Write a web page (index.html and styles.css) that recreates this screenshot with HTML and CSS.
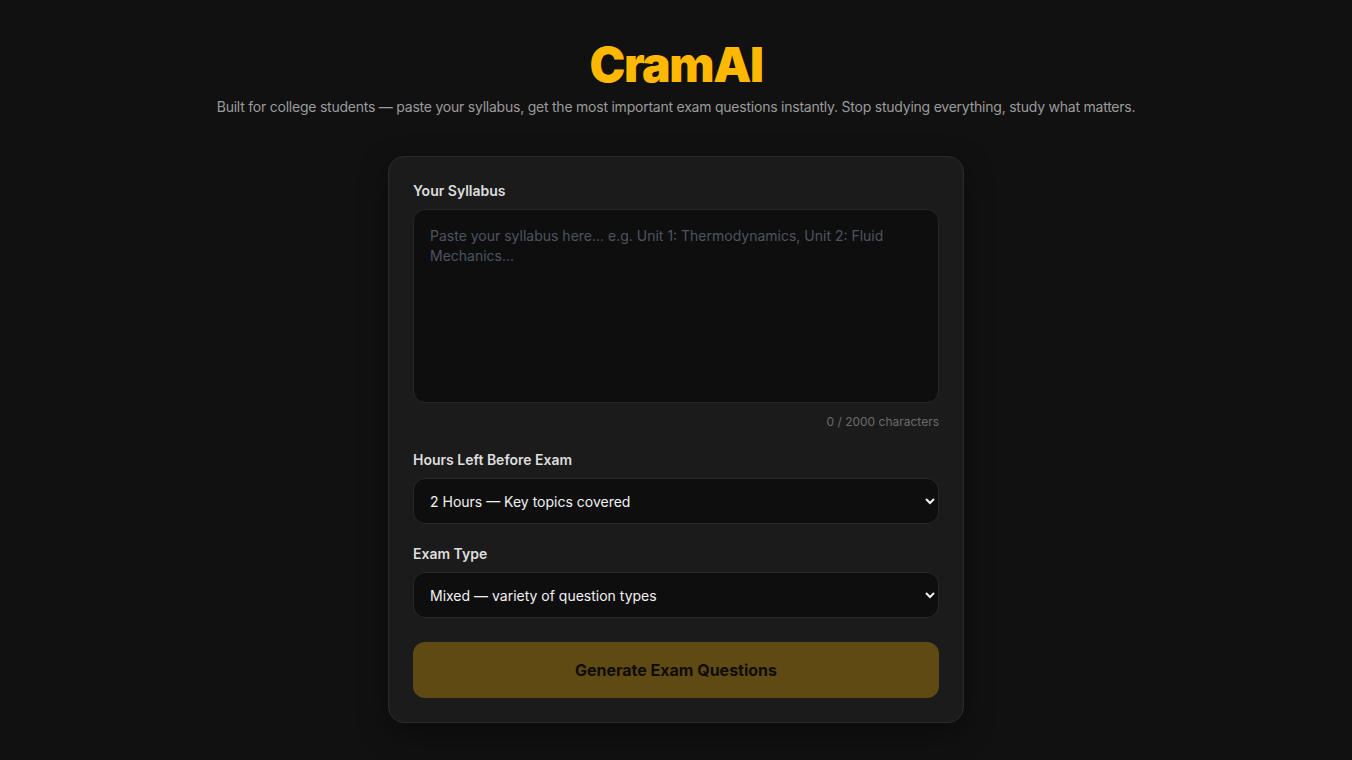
FILE: index.html
```html
<!DOCTYPE html>
<html lang="en">
<head>
    <meta charset="UTF-8">
    <meta name="viewport" content="width=device-width, initial-scale=1.0">
    <title>CramAI</title>
    <link rel="stylesheet" href="styles.css">
</head>
<body>
    <header class="hero">
        <h1 class="logo">CramAI</h1>
        <p class="tagline">Built for college students — paste your syllabus, get the most important exam questions instantly. Stop studying everything, study what matters.</p>
    </header>

    <main class="card">
        <div class="field">
            <label for="syllabus">Your Syllabus</label>
            <textarea id="syllabus" maxlength="2000" placeholder="Paste your syllabus here... e.g. Unit 1: Thermodynamics, Unit 2: Fluid Mechanics..."></textarea>
            <div class="char-count"><span id="charCount">0</span> / 2000 characters</div>
        </div>

        <div class="field">
            <label for="hours">Hours Left Before Exam</label>
            <select id="hours">
                <option>1 Hour — Only the essentials</option>
                <option selected>2 Hours — Key topics covered</option>
                <option>4 Hours — Broad coverage</option>
                <option>8+ Hours — Full review</option>
            </select>
        </div>

        <div class="field last">
            <label for="examType">Exam Type</label>
            <select id="examType">
                <option selected>Mixed — variety of question types</option>
                <option>Multiple choice</option>
                <option>Short answer</option>
                <option>Long answer / essay</option>
            </select>
        </div>

        <button type="button" class="generate" id="generateBtn" disabled>Generate Exam Questions</button>
    </main>

    <script>
        // keep the counter and button state in sync with the textarea
        var syllabus = document.getElementById("syllabus");
        syllabus.addEventListener("input", function() {
            document.getElementById("charCount").textContent = syllabus.value.length;
            document.getElementById("generateBtn").disabled = syllabus.value.trim() === "";
        });
    </script>
</body>
</html>
```

FILE: styles.css
```css
body {
    margin: 0;
    padding: 38px 20px 40px;
    background: #111111;
    color: #e5e5e5;
    font-family: Inter, "Noto Sans", sans-serif;
}
.hero {
    text-align: center;
}
.logo {
    margin: 0;
    font-size: 48px;
    line-height: 53px;
    font-weight: 900;
    letter-spacing: -1.4px;
    color: #ffb800;
}
.tagline {
    margin: 6px 0 0;
    font-size: 14px;
    line-height: 20px;
    letter-spacing: -0.23px;
    color: #9b9b9b;
}
.card {
    box-sizing: border-box;
    width: 576px;
    margin: 39px auto 0;
    padding: 24px;
    background: #1b1b1b;
    border: 1px solid #2b2b2b;
    border-radius: 16px;
    box-shadow: 0 10px 30px rgba(0, 0, 0, 0.4);
}
.field {
    margin-bottom: 19px;
}
.field + .field {
    margin-bottom: 20px;
}
.field.last {
    margin-bottom: 24px;
}
label {
    display: block;
    margin-bottom: 8px;
    font-size: 14px;
    line-height: 20px;
    font-weight: 600;
    color: #dedede;
}
textarea, select {
    box-sizing: border-box;
    width: 100%;
    background: #0e0e0e;
    border: 1px solid #282828;
    border-radius: 12px;
    color: #f2f2f2;
    font-family: inherit;
    font-size: 14px;
}
textarea {
    display: block;
    height: 194px;
    padding: 16px;
    line-height: 20px;
    resize: none;
    outline: none;
}
textarea::placeholder {
    color: #4d5460;
}
select {
    height: 46px;
    padding: 0 8px 0 12px;
    color-scheme: dark;
    outline: none;
}
.char-count {
    margin-top: 10px;
    text-align: right;
    font-size: 12px;
    line-height: 18px;
    color: #6b6b6b;
}
.generate {
    display: block;
    width: 100%;
    height: 56px;
    border: none;
    border-radius: 12px;
    background: #5e4a12;
    color: #0f0c06;
    font-family: inherit;
    font-size: 16px;
    font-weight: 700;
    cursor: not-allowed;
}
```
